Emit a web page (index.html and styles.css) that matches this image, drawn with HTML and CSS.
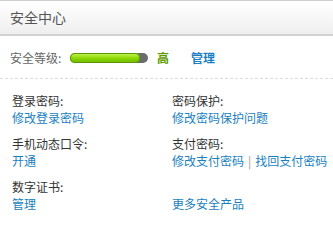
FILE: index.html
```html
<!DOCTYPE html>
<html>
<head>
<meta charset="utf-8">
<link rel="stylesheet" href="styles.css">
</head>
<body>
<div class="panel">
  <div class="head">安全中心</div>
  <div class="level">
    <span class="level-label">安全等级:</span>
    <span class="bar"><span class="bar-fill"></span></span>
    <span class="grade">高</span>
    <a class="manage">管理</a>
  </div>
  <div class="grid">
    <div class="item"><div class="label">登录密码:</div><a class="link">修改登录密码</a></div>
    <div class="item"><div class="label">密码保护:</div><a class="link">修改密码保护问题</a></div>
    <div class="item"><div class="label">手机动态口令:</div><a class="link">开通</a></div>
    <div class="item"><div class="label">支付密码:</div><span><a class="link">修改支付密码</a><span class="sep">|</span><a class="link">找回支付密码</a></span></div>
    <div class="item"><div class="label">数字证书:</div><a class="link">管理</a></div>
    <div class="item"><div class="label">&nbsp;</div><a class="link">更多安全产品</a></div>
  </div>
</div>
</body>
</html>
```
FILE: styles.css
```css
* { box-sizing: border-box; }
body {
  margin: 0;
  background: #fff;
  font-family: "Noto Sans CJK SC", "Liberation Sans", sans-serif;
  font-size: 12px;
  color: #333;
}
.panel { width: 333px; }
.head {
  height: 36px;
  border-top: 1px solid #cfcfcf;
  border-bottom: 2px solid #d0d0d0;
  background: linear-gradient(#ffffff, #efefef);
  padding-left: 10px;
  font-size: 14px;
  line-height: 33px;
  color: #555;
}
.level {
  display: flex;
  align-items: center;
  height: 43px;
  padding: 1px 0 0 10px;
  border-bottom: 1px dashed #dcdcdc;
  color: #666;
}
.level-label { width: 60px; }
.bar {
  width: 78px;
  height: 10px;
  border-radius: 5px;
  background: #6c6c6c;
  display: inline-block;
}
.bar-fill {
  display: block;
  width: 70px;
  height: 10px;
  border-radius: 5px;
  background: linear-gradient(#c8f55a, #8ad600 55%, #6cb800);
  box-shadow: inset 0 0 0 1px #5a9a00;
}
.grade {
  margin-left: 9px;
  color: #5c9a00;
  font-weight: bold;
}
.manage {
  margin-left: 22px;
  color: #1a7fc0;
  font-weight: bold;
}
.grid {
  display: grid;
  grid-template-columns: 160px 173px;
  padding: 13px 0 0 12px;
  row-gap: 8px;
}
.label { line-height: 17px; color: #333; }
.link { color: #1a7fc0; line-height: 18px; }
.sep { color: #999; margin: 0 4px; }
```
